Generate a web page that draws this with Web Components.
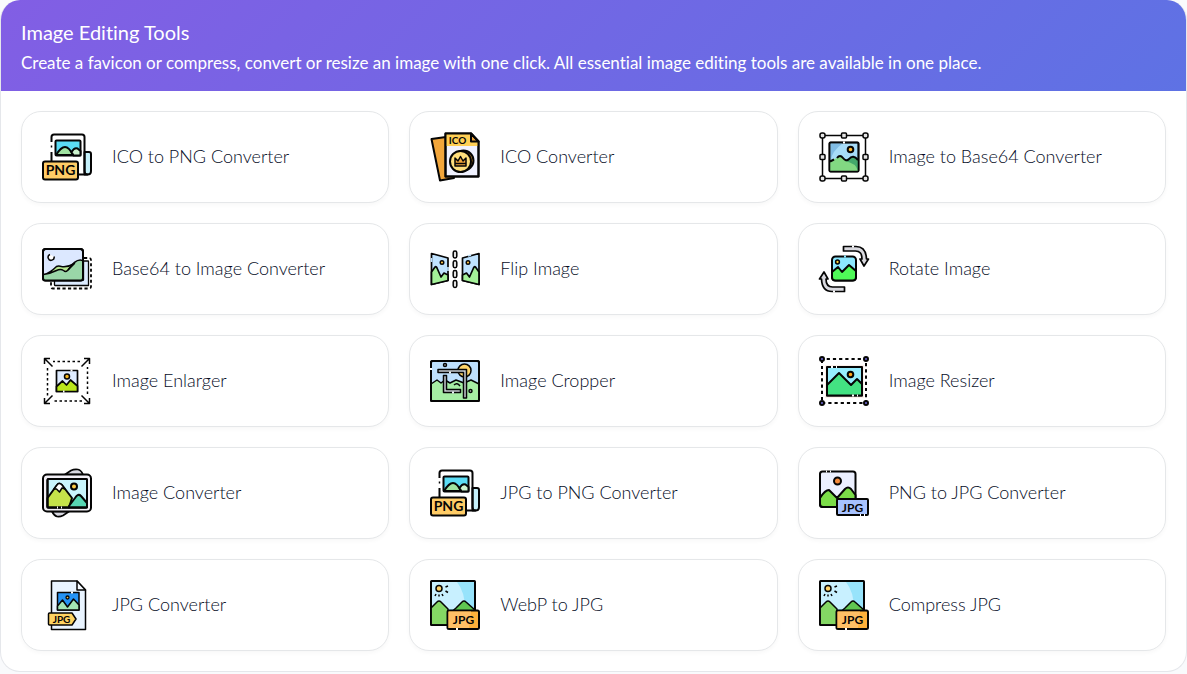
<!DOCTYPE html>
<html lang="en">
<head>
<meta charset="UTF-8">
<meta name="viewport" content="width=device-width, initial-scale=1">
<title>Image Editing Tools</title>
<style>
  body {
    margin: 0;
    background: #f9fafc;
    font-family: Lato, "Open Sans", sans-serif;
    font-variant-ligatures: none;
    color: #060d1f;
  }
</style>
</head>
<body>

<tool-panel>
  <span slot="title">Image Editing Tools</span>
  <span slot="text">Create a favicon or compress, convert or resize an image with one click. All essential image editing tools are available in one place.</span>

  <tool-card icon="png" href="#ico-to-png">ICO to PNG Converter</tool-card>
  <tool-card icon="ico" href="#ico-converter">ICO Converter</tool-card>
  <tool-card icon="frame" href="#image-to-base64">Image to Base64 Converter</tool-card>
  <tool-card icon="layers" href="#base64-to-image">Base64 to Image Converter</tool-card>
  <tool-card icon="flip" href="#flip-image">Flip Image</tool-card>
  <tool-card icon="rotate" href="#rotate-image">Rotate Image</tool-card>
  <tool-card icon="enlarge" href="#image-enlarger">Image Enlarger</tool-card>
  <tool-card icon="crop" href="#image-cropper">Image Cropper</tool-card>
  <tool-card icon="resize" href="#image-resizer">Image Resizer</tool-card>
  <tool-card icon="convert" href="#image-converter">Image Converter</tool-card>
  <tool-card icon="png" href="#jpg-to-png">JPG to PNG Converter</tool-card>
  <tool-card icon="tojpg" href="#png-to-jpg">PNG to JPG Converter</tool-card>
  <tool-card icon="jpgfile" href="#jpg-converter">JPG Converter</tool-card>
  <tool-card icon="jpg" href="#webp-to-jpg">WebP to JPG</tool-card>
  <tool-card icon="jpg" href="#compress-jpg">Compress JPG</tool-card>
</tool-panel>

<template id="panel-template">
  <style>
    :host {
      display: block;
      border: 1px solid #e5e7eb;
      border-top: 0;
      border-radius: 20px;
      background: #fff;
      overflow: hidden;
    }

    header {
      padding: 20px;
      background: linear-gradient(135deg, #825ee4, #5e72e4);
      color: #fff;
    }

    h1, p {
      margin: 0;
      font-weight: 400;
    }

    h1 {
      font-size: 20px;
      line-height: 24px;
    }

    p {
      margin-top: 10px;
      font-size: 17px;
      line-height: 17px;
    }

    .tools {
      display: grid;
      grid-template-columns: repeat(3, 1fr);
      gap: 20px;
      padding: 20px;
    }

    @media (max-width: 900px) {
      .tools { grid-template-columns: repeat(2, 1fr); }
      p { line-height: 20px; }
    }

    @media (max-width: 600px) {
      .tools { grid-template-columns: 1fr; }
    }
  </style>

  <header>
    <h1><slot name="title"></slot></h1>
    <p><slot name="text"></slot></p>
  </header>
  <div class="tools"><slot></slot></div>
</template>

<template id="card-template">
  <style>
    :host {
      display: block;
    }

    a {
      display: flex;
      align-items: center;
      gap: 20px;
      padding: 20px;
      border: 1px solid #e5e7e9;
      border-radius: 20px;
      background: #fff;
      box-shadow: 0 2px 4px rgba(0, 0, 0, .03);
      color: inherit;
      font-size: 18px;
      font-weight: 300;
      line-height: 24px;
      text-decoration: none;
    }

    a:hover {
      border-color: #825ee4;
    }

    span {
      padding-bottom: 2px;
    }
  </style>

  <a><tool-icon></tool-icon><span><slot></slot></span></a>
</template>

<script>
// all icons are drawn on a 50x50 grid
const icons = {
  png: `
    <path d="M42.500 20H47q2 0 2 2v17q0 3.500-3.500 3.500h-3z" fill="#c5f1fb"/>
    <path d="M9.500 10V5q0-2.500 2.500-2.500h28q2.500 0 2.500 2.500v34q0 3.500 3 3.500H36M9.500 20v10" fill="none"/>
    <path d="M9.500 13.500v2" stroke-width="1.500"/>
    <rect x="13.500" y="8.500" width="25" height="15" rx="1" fill="#5bdcf4"/>
    <path d="M14 23q5-8 9-8t8 8z" fill="#a0e3a1"/>
    <path d="M29.500 20q3-5 6-3.500l3 2.500v4.500h-7z" fill="#cdf3ce"/>
    <rect x="1" y="29.500" width="35" height="18" rx="2" fill="#ffcc66"/>
    <text x="18.500" y="43" font-size="14">PNG</text>`,
  ico: `
    <path d="M1.500 7 16 5l8 41-14 2.500z" fill="#f2a63b"/>
    <path d="M15.500 1.500H41l7.500 8v35h-33z" fill="#f0f2ff"/>
    <path d="M15.500 1.500H41l7.500 8V14h-33z" fill="#ffcf55" stroke="none"/>
    <path d="M41 1.500v8h7.500z" fill="#f2a63b"/>
    <path d="M15.500 1.500H41l7.500 8v35h-33z" fill="none"/>
    <circle cx="33.500" cy="28.500" r="10" fill="#d78f28"/>
    <circle cx="30.500" cy="29.500" r="10.500" fill="#ffdf7c"/>
    <path d="M25 26l3 3 2.500-4.500L33 29l3-3v8H25zM25 31.500h11" fill="#f2a63b" stroke-width="1.500"/>
    <text x="27.500" y="11.500" font-size="10">ICO</text>`,
  frame: `
    <g transform="translate(-1 0)">
    <rect x="4.500" y="3.500" width="43" height="43" fill="none" stroke-width="1.500"/>
    <rect x="11.500" y="10.500" width="29" height="29" rx="1" fill="#a7dcf8"/>
    <path d="M12.500 11.500h12Q14 19 12.500 29z" fill="#80bce4" stroke="none"/>
    <path d="M12 30q3-3 7-4 3-4 6 0 3 4 6 1 4-5 9 1v12H12z" fill="#82d882" stroke="none"/>
    <path d="M31 27q4-5 9 1v11q-2-8-13-10z" fill="#43a86b" stroke="none"/>
    <path d="M12 29.500l4-2M19 26q3-4 6 0 3 4 6 1 4-5 9 1" fill="none"/>
    <rect x="11.500" y="10.500" width="29" height="29" rx="1" fill="none" stroke-width="1.500"/>
    <path d="M25 10.500h2" stroke="#fff"/>
    <circle cx="32.500" cy="17.500" r="2.800" fill="#ffb82e"/>
    <g fill="#e4e4e4" stroke-width="1.500">
      <rect x="2" y="1" width="5" height="5" rx="2"/><rect x="23.500" y="1" width="5" height="5" rx="1"/><rect x="45" y="1" width="5" height="5" rx="2"/>
      <rect x="2" y="22.500" width="5" height="5" rx="1"/><rect x="45" y="22.500" width="5" height="5" rx="1"/>
      <rect x="2" y="44" width="5" height="5" rx="2"/><rect x="23.500" y="44" width="5" height="5" rx="1"/><rect x="45" y="44" width="5" height="5" rx="2"/>
    </g>
    </g>`,
  layers: `
    <path d="M42 14h5q2 0 2 2v26.500q0 2-2 2H11q-2 0-2-2V38" fill="none" stroke-width="1.800" stroke-dasharray="3.200 2.300"/>
    <path d="M12.500 36h29V17H46q.5 0 .5.500v24H13q-.500 0-.5-.5z" fill="#dcebff" stroke-width="1.300"/>
    <rect x="1" y="5" width="40" height="31.500" rx="2.500" fill="#dce8ff"/>
    <path d="M1.500 30.500q8-1 13-4 3-2 7 1 3 2 6-3 7-9 13-8.500v20H1.500z" fill="#9ad7a8" stroke="none"/>
    <path d="M1.500 30.500q6-1 13-8 2-1 5 0 6 1 13-3-5 5-7 7-2 2-4 0-3-2-7 0-6 3-13 4z" fill="#b9e891" stroke-width="1.500"/>
    <path d="M26 26q8-12 14.500-9.500" fill="none" stroke-width="1.500"/>
    <rect x="1" y="5" width="40" height="31.500" rx="2.500" fill="none"/>
    <path d="M8 10.500a3 3 0 1 0 4 2" fill="#fff" stroke-width="1.500"/>`,
  flip: `
    <g stroke-width="1.700">
    <path d="M1.500 9.500 18 14v22.500L1.500 40.500z" fill="#c0e3ff"/>
    <path d="M1.500 28 5 23q1-1 2 1l4 9 3-4 4 2v5.500l-16.500 4z" fill="#a4f199"/>
    <path d="M1.500 14v4M18 23v4" stroke="#c0e3ff"/>
    <circle cx="12" cy="18.500" r="1.800" fill="#f7bd45" stroke-width="1.400"/>
    <path d="M49 9.500 32.500 14v22.500l16.500 4z" fill="#c0e3ff"/>
    <path d="M49 28l-3.500-5q-1-1-2 1l-4 9-3-4-4 2v5.500l16.500 4z" fill="#a4f199"/>
    <path d="M38 12l3-1" stroke="#c0e3ff"/>
    <circle cx="38" cy="18.500" r="1.800" fill="#f7bd45" stroke-width="1.400"/>
    </g>
    <g fill="#e3e3e3" stroke-width="1.500">
      <rect x="23.200" y="7" width="3.600" height="7" rx="1.700"/><rect x="23.200" y="16.800" width="3.600" height="7" rx="1.700"/>
      <rect x="23.200" y="26.600" width="3.600" height="7" rx="1.700"/><rect x="23.200" y="36.400" width="3.600" height="7" rx="1.700"/>
    </g>`,
  rotate: `
    <g transform="translate(-1 0)">
    <rect x="14" y="12.500" width="24" height="24" rx="3.500" fill="#8ce8ff"/>
    <path d="M14 28l6-5 4 5 7-7 7 6v6q0 3.500-3.500 3.500h-17Q14 36.500 14 33z" fill="#4ffa58"/>
    <path d="M26 12.500h2" stroke="#8ce8ff"/>
    <circle cx="19.500" cy="18" r="1.900" fill="#ffd23c" stroke-width="1.500"/>
    <g fill="#d9d9df" stroke-width="1.700">
      <path d="M25.500 2.500H38q10 0 10.500 12.500h2l-4.500 7-4-7h2q0-8-6.500-8h-12z"/>
      <path d="M26.500 47.500H14Q4 47.500 3.500 35h-2L6 28l4 7H8q0 8 6.500 8h12z"/>
    </g>
    <path d="M34 2.500h2M15 47.500h2" stroke="#fff"/>
    </g>`,
  enlarge: `
    <rect x="5.500" y="5.500" width="40" height="39.500" fill="none" stroke-width="1.500" stroke-dasharray="2.500 2.500"/>
    <path d="M2 2h9v9H2zM40 2h9v9h-9zM2 40h9v9H2zM40 40h9v9h-9z" fill="#fff" stroke="none"/>
    <path d="M10.500 10.500l-8-8M8 2.500H2.500V8M39.500 10.500l8-8M42 2.500h5.500V8M10.500 39.500l-8 8M8 47.500H2.500V42M39.500 39.500l8 8M42 47.500h5.500V42" fill="none" stroke-width="1.500"/>
    <rect x="14.500" y="14.500" width="21" height="21" fill="#dfecff" stroke-width="1.700"/>
    <path d="M14.500 30.500l6-5.500 4 4 4-5 7 6v5.500h-21z" fill="#bae61c" stroke-width="1.700"/>
    <path d="M28.500 14.500h2M21 35.500h1.500" stroke="#fff"/>
    <circle cx="25" cy="20.500" r="2.500" fill="#f9b821" stroke-width="1.500"/>`,
  crop: `
    <rect x="1" y="5" width="48" height="40" rx="1.500" fill="#bee0fd"/>
    <circle cx="34.500" cy="14.500" r="6.500" fill="#ffd66b" stroke-width="1.500"/>
    <path d="M1 28l6-4 4 3 4-3 5 3 6-3 8 3 7-3 8 4v17H1z" fill="#a6eda4" stroke-width="1.500"/>
    <path d="M24 29q3-3 6 1" fill="none" stroke-width="1.500"/>
    <rect x="1" y="5" width="48" height="40" rx="1.500" fill="none"/>
    <path d="M1 12v2" stroke="#fff"/>
    <g fill="#c7ccd2" stroke-width="1.500">
      <path d="M8 13.500h28.500v28.500h-3V16.500H8z"/>
      <path d="M13.500 19.500h3v14h14v3h-17z"/>
      <circle cx="15" cy="9" r="1.500"/><circle cx="40.500" cy="35" r="1.500"/>
    </g>
    <path d="M19 16.500h2M22 36.500h2" stroke="#eef4f7"/>`,
  resize: `
    <g transform="translate(-1 0)">
    <rect x="4" y="3" width="44" height="44" fill="none" stroke-dasharray="3.200 3" stroke-dashoffset="1.500"/>
    <rect x="7" y="9" width="39" height="33" fill="#fcf0ea" stroke="none"/>
    <rect x="9" y="11" width="35" height="28.500" fill="#97eeff"/>
    <path d="M9 29l12-12 12 12 6-6 5 5v11.500H9z" fill="#43e282"/>
    <path d="M13 11h2M18 11h1M34 39.500h2M39 39.500h1" stroke="#fff"/>
    <circle cx="32.500" cy="18.500" r="2.800" fill="#ffa51d"/>
    <g fill="#716ad8">
      <circle cx="4" cy="3" r="2"/><circle cx="48" cy="3" r="2"/><circle cx="4" cy="47" r="2"/><circle cx="48" cy="47" r="2"/>
    </g>
    </g>`,
  convert: `
    <path d="M23 6.500l6-4q3-1.500 7-1 3 .500 5 5zM27 43.500l-6 4q-3 1.500-6 1-3-1-5-5z" fill="#d8d8e1" stroke-width="1.700"/>
    <rect x="1" y="6.500" width="48" height="37" rx="4" fill="#f3f0f7"/>
    <rect x="5.500" y="11" width="39.500" height="28.500" rx="1" fill="#c9f4fc"/>
    <path d="M5.500 30 15 17q2-3 5 0l10 13-3 9.500H5.500z" fill="#c5e34a"/>
    <path d="M12 21l3-4q2-3 5 0l3 4-3-1-2.500 4-3-3z" fill="#fff" stroke-width="1.500"/>
    <path d="M27 38l6-8q3-5 6-2l6 7v4.500H27z" fill="#57d5b3"/>
    <rect x="5.500" y="11" width="39.500" height="28.500" rx="1" fill="none"/>
    <path d="M15 39.500h1M19 39.500h1" stroke="#fff"/>
    <circle cx="32" cy="18.500" r="3" fill="#fdcc48"/>`,
  tojpg: `
    <rect x="1" y="3.500" width="35.500" height="35.500" rx="2.500" fill="#ecf0ff"/>
    <path d="M1 30q5-8 9-8l8 8 8-9q3-3 6 0l4.500 6v12H4q-3 0-3-3z" fill="#7bdc48"/>
    <path d="M7 3.500h1M11 3.500h1" stroke="#fff"/>
    <circle cx="18.500" cy="13" r="3.500" fill="#f58b3c"/>
    <rect x="18" y="31" width="31" height="16" rx="1" fill="#a7c2ff"/>
    <path d="M41 47h1M45 47h1" stroke="#fff"/>
    <text x="33.500" y="43.500" font-size="12">JPG</text>`,
  jpgfile: `
    <path d="M9.500 1H35l8.500 9v39.500h-34z" fill="#e9f4ff" stroke-width="1.500"/>
    <path d="M35 1v9h8.500z" fill="#f7fbff" stroke-width="1.500"/>
    <rect x="15.500" y="12.500" width="21.500" height="17.500" fill="#2493f5" stroke-width="1.500"/>
    <path d="M15.500 26l5-6 5 7 6-8 5.500 6v5H15.500z" fill="#a3e6b4" stroke-width="1.500"/>
    <circle cx="25.500" cy="17.500" r="1.500" fill="#ffc647" stroke-width="1.300"/>
    <path d="M29 12.500h2" stroke="#fff"/>
    <path d="M7.500 33H30l4 6-4 6H7.500q-1 0-1-1V34q0-1 1-1z" fill="#ffd361" stroke-width="1.500"/>
    <text x="19.500" y="42.500" font-size="10">JPG</text>`,
  jpg: `
    <rect x="1" y="1" width="44" height="44" rx="1" fill="#97e3fb"/>
    <path d="M2 2h25q8 10 8 27H2z" fill="#c8f0ff" stroke="none"/>
    <path d="M17 36l9-8 6-6q2-2 4 0l9 8v15H17z" fill="#60c750" stroke-width="1.500"/>
    <path d="M1 28l6-6q2-2 4 0l7 7v16H1z" fill="#84d764" stroke-width="1.500"/>
    <rect x="1" y="1" width="44" height="44" rx="1" fill="none" stroke-width="1.500"/>
    <circle cx="9" cy="8.500" r="3" fill="#ffd36b" stroke-width="1.500"/>
    <path d="M15.500 7l2.500-1M15.500 11l2.500 1.500M12 14l1 2M9 14.500v2M6 14l-1 2" stroke-width="1.500"/>
    <rect x="17.500" y="30.500" width="31.500" height="18.500" rx="1.500" fill="#ffb13b"/>
    <path d="M18.500 31.500H41q-1 10-2 16.500H18.500z" fill="#ffc066" stroke="none"/>
    <path d="M26 49h2" stroke="#fff"/>
    <text x="33.500" y="44" font-size="12">JPG</text>`
}

customElements.define(
  "tool-panel",
  class extends HTMLElement {
    constructor() {
      super();
      const template = document.querySelector("#panel-template");
      this.attachShadow({ mode: "open" });
      this.shadowRoot.appendChild(template.content.cloneNode(true));
    }
  }
);

customElements.define(
  "tool-icon",
  class extends HTMLElement {
    static observedAttributes = ["name"];

    constructor() {
      super();
      this.attachShadow({ mode: "open" });
    }

    attributeChangedCallback() {
      this.shadowRoot.innerHTML = `
        <style>
          :host {
            display: block;
            flex: none;
            width: 50px;
            height: 50px;
          }

          svg {
            display: block;
            width: 100%;
            height: 100%;
            overflow: visible;
            stroke: #050505;
            stroke-width: 2px;
            stroke-linejoin: round;
          }

          text {
            fill: #050505;
            stroke: none;
            font-family: Lato, sans-serif;
            font-weight: 700;
            text-anchor: middle;
          }
        </style>
        <svg viewBox="0 0 50 50" aria-hidden="true">${icons[this.getAttribute("name")]}</svg>
      `;
    }
  }
);

customElements.define(
  "tool-card",
  class extends HTMLElement {
    constructor() {
      super();
      const template = document.querySelector("#card-template");
      this.attachShadow({ mode: "open" });
      this.shadowRoot.appendChild(template.content.cloneNode(true));
    }

    connectedCallback() {
      this.shadowRoot.querySelector("a").href = this.getAttribute("href");
      this.shadowRoot.querySelector("tool-icon").setAttribute("name", this.getAttribute("icon"));
    }
  }
);
</script>
</body>
</html>
